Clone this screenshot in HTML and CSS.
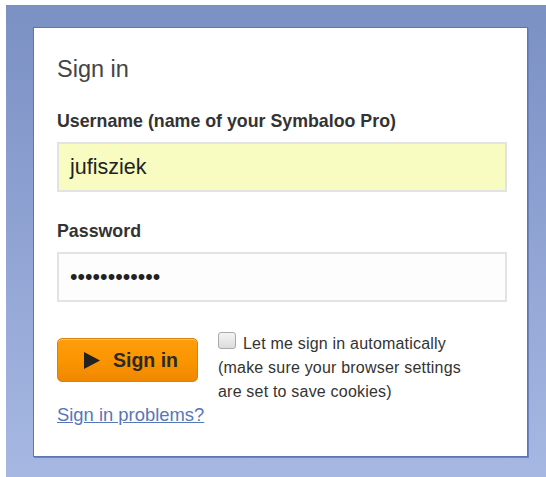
FILE: index.html
```html
<!DOCTYPE html>
<html lang="en">
<head>
<meta charset="utf-8">
<title>Sign in</title>
<link rel="stylesheet" href="styles.css">
</head>
<body>
<div class="backdrop">
  <form class="card">
    <h1 class="title">Sign in</h1>

    <label class="label" for="username">Username (name of your Symbaloo Pro)</label>
    <div class="field field-filled" id="username">jufisziek</div>

    <label class="label label-password" for="password">Password</label>
    <div class="field" id="password">••••••••••••</div>

    <div class="actions">
      <button class="btn" type="button">
        <svg class="btn-icon" width="16" height="17" viewBox="0 0 16 17"><path d="M0 0 L16 8.5 L0 17 Z" fill="#222"/></svg>
        <span>Sign in</span>
      </button>
      <div class="remember">
        <span class="checkbox"></span><span class="remember-text">Let me sign in automatically</span><br>
        (make sure your browser settings<br>
        are set to save cookies)
      </div>
    </div>

    <a class="help" href="#">Sign in problems?</a>
  </form>
</div>
</body>
</html>
```

FILE: styles.css
```css
html, body {
  margin: 0;
  padding: 0;
  background: #ffffff;
  height: 100%;
}

body {
  font-family: "Liberation Sans", Arial, sans-serif;
  color: #333;
}

.backdrop {
  margin: 5px 0 0 6px;
  height: 472px;
  box-sizing: border-box;
  padding: 22px 18px 20px 27px;
  background: linear-gradient(180deg, #7b90c3 0%, #8ea2d2 45%, #a6b8e2 100%);
}

.card {
  height: 100%;
  box-sizing: border-box;
  background: #fff;
  border: 1px solid #5b76b4;
  box-shadow: 1px 1px 0 #6a84bf;
  padding: 27px 20px 0 23px;
}

.title {
  margin: 0;
  font-size: 23.5px;
  line-height: 28px;
  font-weight: normal;
  color: #444;
}

.label {
  display: block;
  margin-top: 27px;
  font-size: 17.8px;
  line-height: 22px;
  font-weight: bold;
  color: #333;
}

.label-password {
  margin-top: 28px;
}

.field {
  margin-top: 10px;
  height: 50px;
  box-sizing: border-box;
  border: 2px solid #e3e3e3;
  background: #fdfdfd;
  padding: 0 0 0 11px;
  font-size: 21.5px;
  line-height: 46px;
  color: #222;
}

.field-filled {
  background: #f8fcc0;
}

.actions {
  display: flex;
  align-items: flex-start;
  gap: 20px;
  margin-top: 30px;
}

.btn {
  margin-top: 6px;
  width: 141px;
  height: 44px;
  box-sizing: border-box;
  display: flex;
  align-items: center;
  gap: 13px;
  padding: 0 0 0 26px;
  border: 1px solid #d68210;
  border-radius: 5px;
  background: linear-gradient(180deg, #ff9d0c 0%, #fb9500 50%, #f08800 100%);
  box-shadow: inset 0 1px 0 rgba(255, 220, 150, 0.6);
  font-family: "Liberation Sans", Arial, sans-serif;
  font-size: 19.5px;
  font-weight: bold;
  color: #2a2a2a;
  cursor: pointer;
}

.btn-icon {
  display: block;
  flex: none;
}

.remember {
  font-size: 16px;
  line-height: 24px;
  letter-spacing: 0.2px;
  color: #333;
}

.checkbox {
  display: inline-block;
  width: 18px;
  height: 17px;
  box-sizing: border-box;
  margin-right: 7px;
  border: 1px solid #a9a9a9;
  border-radius: 3px;
  background: linear-gradient(180deg, #f4f4f4, #dcdcdc);
  vertical-align: 0;
}

.help {
  display: inline-block;
  font-size: 18.4px;
  line-height: 22px;
  color: #5577b8;
  text-decoration: underline;
}
```
